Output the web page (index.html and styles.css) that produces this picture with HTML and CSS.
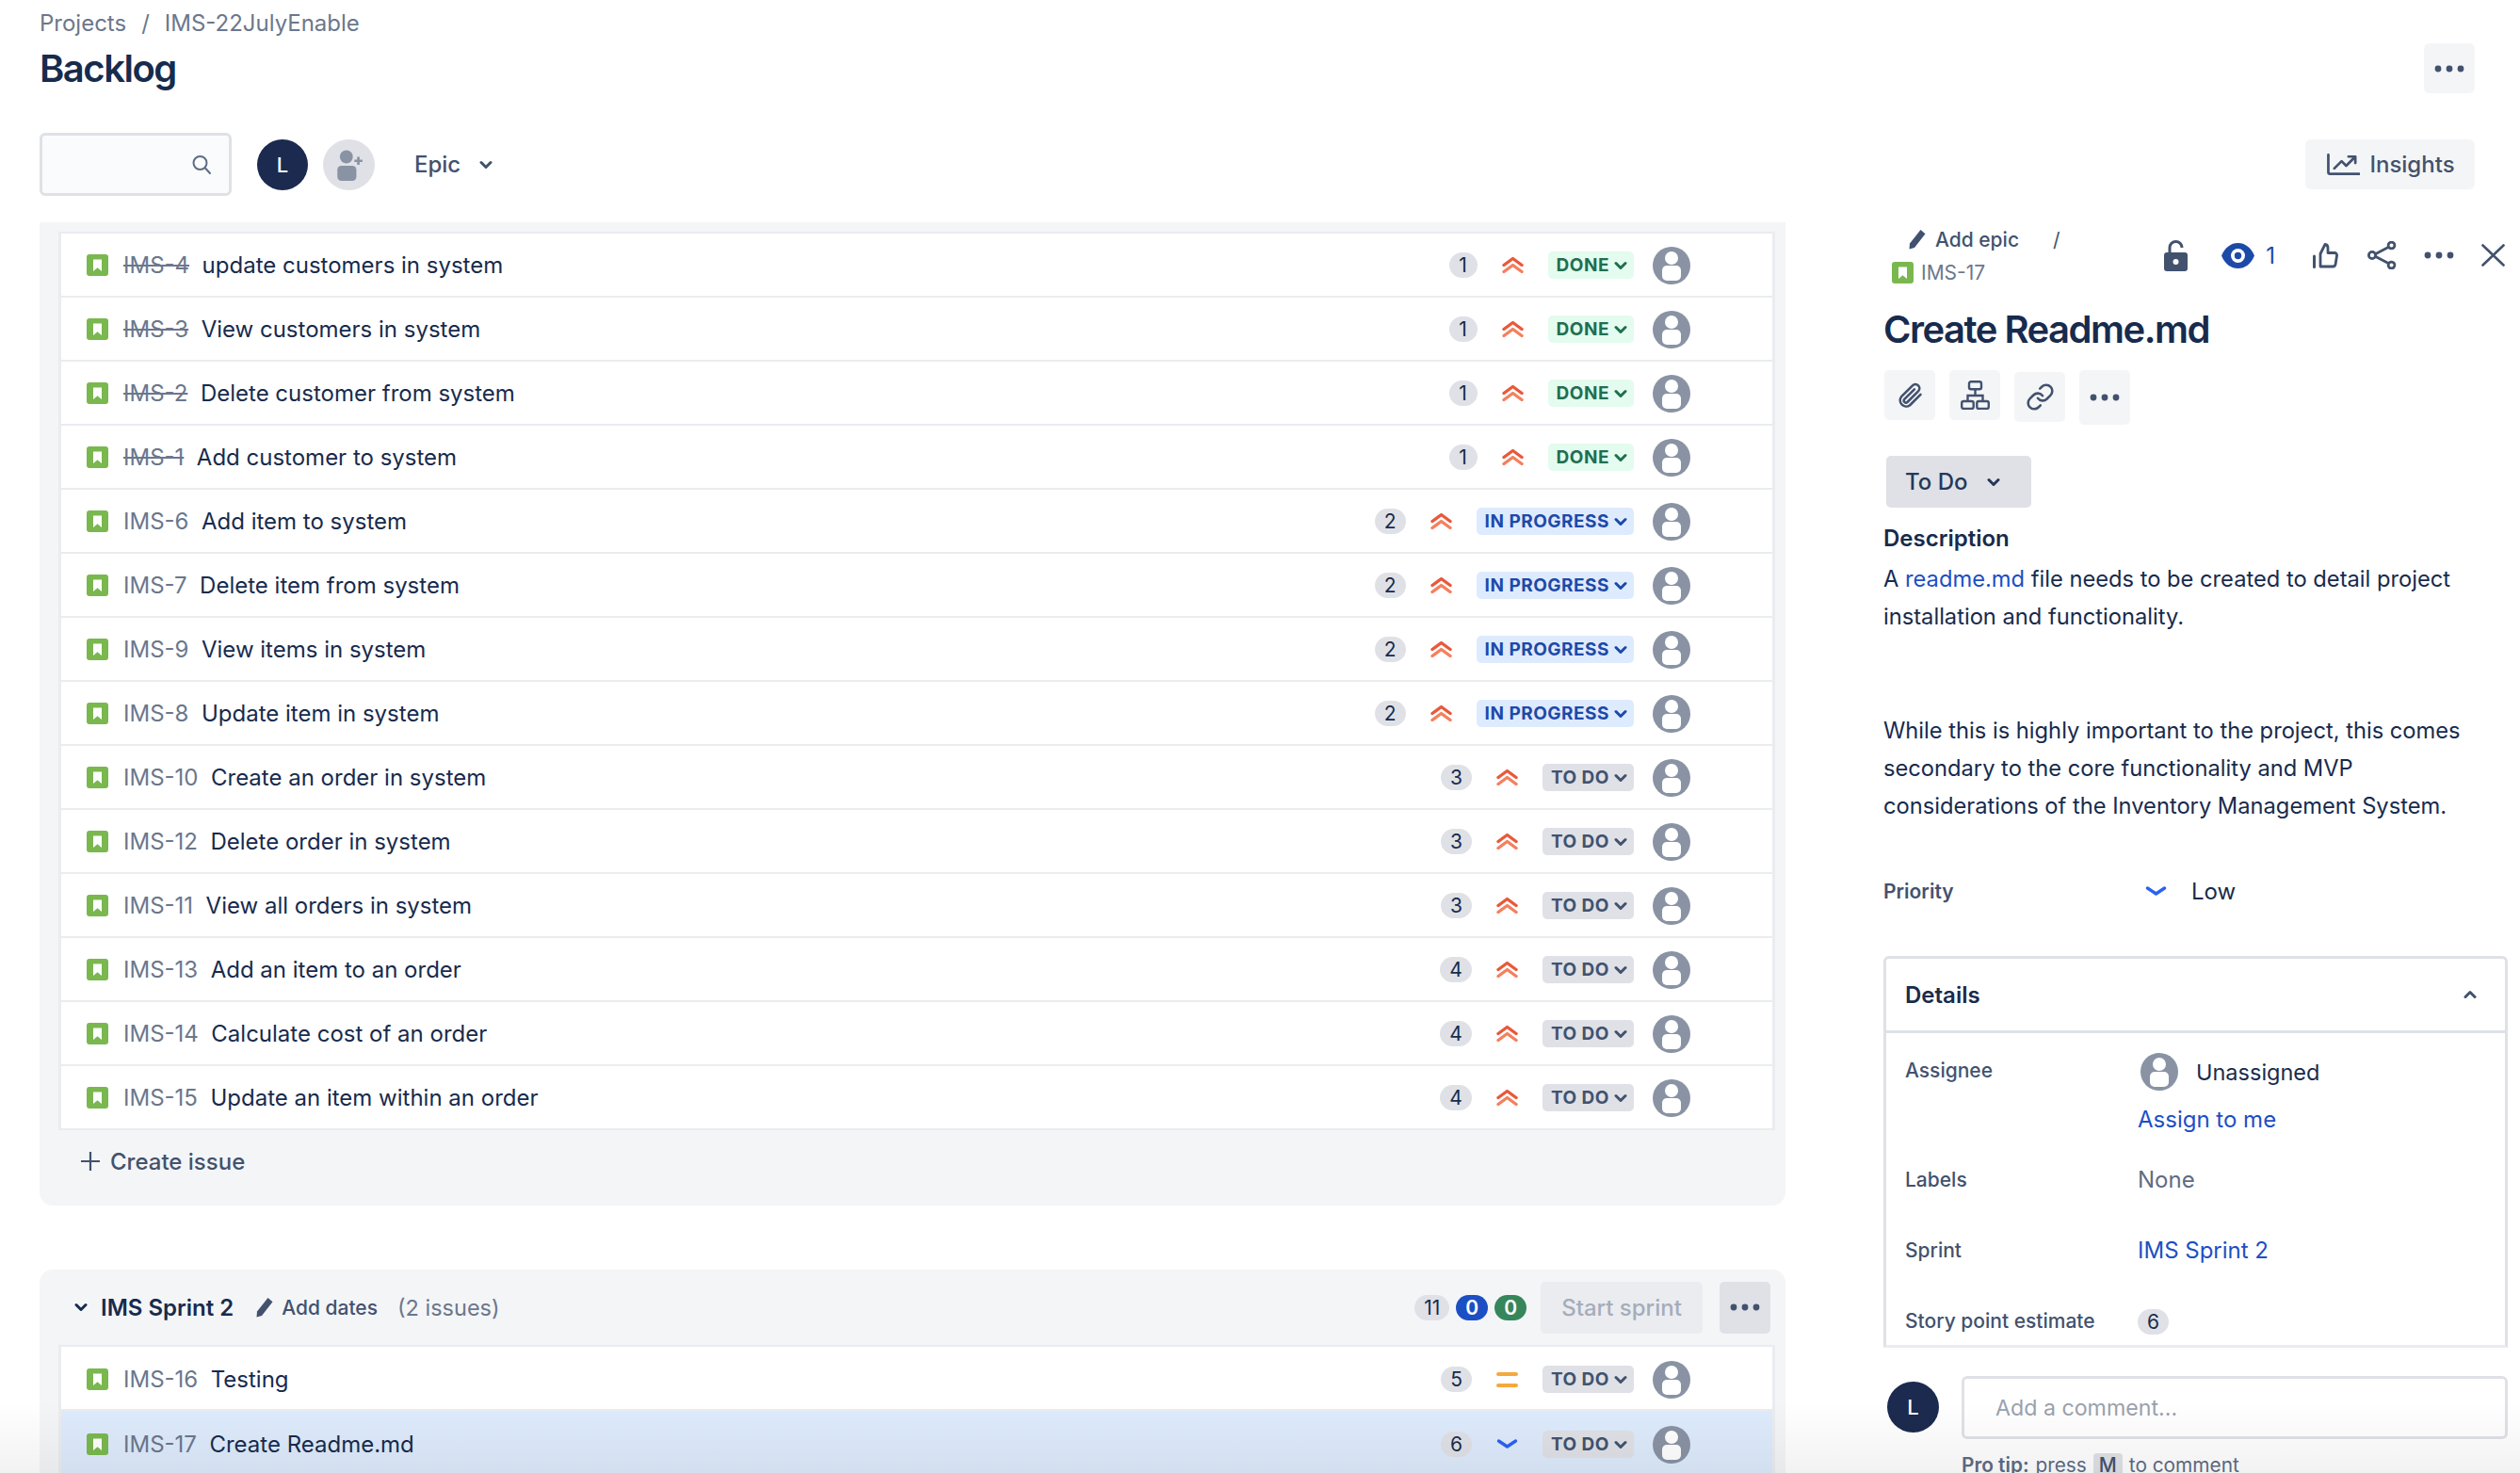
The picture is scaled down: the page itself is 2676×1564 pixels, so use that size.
FILE: index.html
```html
<!DOCTYPE html>
<html lang="en">
<head>
    <meta charset="UTF-8">
    <meta name="viewport" content="width=device-width, initial-scale=1.0">
    <title>Backlog</title>
    <link rel="stylesheet" href="styles.css">
</head>
<body>

<svg class="sprites" width="0" height="0">
    <symbol id="story" viewBox="0 0 23 23">
        <rect width="23" height="23" rx="3" fill="#7ab84f"/>
        <path d="M7 5.500h9v12.500l-4.500-3.800L7 18z" fill="#fff"/>
    </symbol>
    <symbol id="user" viewBox="0 0 40 40">
        <circle cx="20" cy="20" r="20" fill="#8993a4"/>
        <circle cx="20" cy="12" r="7" fill="#fff"/>
        <rect x="10" y="20" width="20" height="16" rx="5" fill="#fff"/>
    </symbol>
    <symbol id="highest" viewBox="0 0 23 19">
        <path d="M2 9.500L11.500 2.500 21 9.500" fill="none" stroke="#e8593b" stroke-width="3.400" stroke-linecap="round" stroke-linejoin="round"/>
        <path d="M2 16.500L11.500 9.500 21 16.500" fill="none" stroke="#f4805f" stroke-width="3.400" stroke-linecap="round" stroke-linejoin="round"/>
    </symbol>
    <symbol id="chev" viewBox="0 0 14 10">
        <path d="M2 2.500L7 7.500 12 2.500" fill="none" stroke="currentColor" stroke-width="3" stroke-linecap="round" stroke-linejoin="round"/>
    </symbol>
    <symbol id="dots" viewBox="0 0 32 8">
        <circle cx="4" cy="4" r="3.400" fill="currentColor"/><circle cx="16" cy="4" r="3.400" fill="currentColor"/><circle cx="28" cy="4" r="3.400" fill="currentColor"/>
    </symbol>
    <symbol id="pencil" viewBox="0 0 20 22">
        <path d="M13.500 1l5 4.200L7 20l-5.500 1.500L2 15.500z" fill="currentColor"/>
    </symbol>
</svg>

<div class="page">

    <div class="crumbs"><span>Projects</span><span class="crumb-sep">/</span><span>IMS-22JulyEnable</span></div>

    <div class="title-row">
        <h1>Backlog</h1>
        <button class="ghost-btn square"><svg class="dots-icon"><use href="#dots"/></svg></button>
    </div>

    <div class="toolbar">
        <div class="toolbar-left">
            <div class="search">
                <svg class="search-icon" viewBox="0 0 22 22"><circle cx="9.500" cy="9" r="7" fill="none" stroke="#5e6c84" stroke-width="2"/><path d="M15 14.500l5 5.500" stroke="#5e6c84" stroke-width="2" stroke-linecap="round"/></svg>
            </div>
            <div class="avatar-me">L</div>
            <div class="avatar-add">
                <svg viewBox="0 0 32 32" width="34" height="34"><circle cx="13" cy="8" r="6.500" fill="#8993a4"/><rect x="4" y="17" width="19" height="15" rx="4" fill="#8993a4"/><path d="M25 8v8M21 12h8" stroke="#8993a4" stroke-width="2.500"/></svg>
            </div>
            <div class="epic">Epic<svg class="chev-icon"><use href="#chev"/></svg></div>
        </div>
        <button class="ghost-btn insights">
            <svg class="trend-icon" viewBox="0 0 36 24"><path d="M1.500 1v19a2 2 0 0 0 2 2h32" fill="none" stroke="currentColor" stroke-width="2.800" stroke-linecap="round"/><path d="M8 16l8-8 5 5 9-9M23.500 3h7.500v7" fill="none" stroke="currentColor" stroke-width="2.800" stroke-linecap="round" stroke-linejoin="round"/></svg>
            Insights
        </button>
    </div>

    <div class="content">

        <div class="backlog">
            <div class="panel panel-first">
                <div class="issue-list">
                    <div class="issue"><svg class="story-icon"><use href="#story"/></svg><span class="key key-done">IMS-4</span><span class="summary">update customers in system</span><span class="points">1</span><svg class="prio"><use href="#highest"/></svg><span class="status status-done">DONE<svg><use href="#chev"/></svg></span><svg class="user-icon"><use href="#user"/></svg></div>
                    <div class="issue"><svg class="story-icon"><use href="#story"/></svg><span class="key key-done">IMS-3</span><span class="summary">View customers in system</span><span class="points">1</span><svg class="prio"><use href="#highest"/></svg><span class="status status-done">DONE<svg><use href="#chev"/></svg></span><svg class="user-icon"><use href="#user"/></svg></div>
                    <div class="issue"><svg class="story-icon"><use href="#story"/></svg><span class="key key-done">IMS-2</span><span class="summary">Delete customer from system</span><span class="points">1</span><svg class="prio"><use href="#highest"/></svg><span class="status status-done">DONE<svg><use href="#chev"/></svg></span><svg class="user-icon"><use href="#user"/></svg></div>
                    <div class="issue"><svg class="story-icon"><use href="#story"/></svg><span class="key key-done">IMS-1</span><span class="summary">Add customer to system</span><span class="points">1</span><svg class="prio"><use href="#highest"/></svg><span class="status status-done">DONE<svg><use href="#chev"/></svg></span><svg class="user-icon"><use href="#user"/></svg></div>
                    <div class="issue"><svg class="story-icon"><use href="#story"/></svg><span class="key">IMS-6</span><span class="summary">Add item to system</span><span class="points">2</span><svg class="prio"><use href="#highest"/></svg><span class="status status-progress">IN PROGRESS<svg><use href="#chev"/></svg></span><svg class="user-icon"><use href="#user"/></svg></div>
                    <div class="issue"><svg class="story-icon"><use href="#story"/></svg><span class="key">IMS-7</span><span class="summary">Delete item from system</span><span class="points">2</span><svg class="prio"><use href="#highest"/></svg><span class="status status-progress">IN PROGRESS<svg><use href="#chev"/></svg></span><svg class="user-icon"><use href="#user"/></svg></div>
                    <div class="issue"><svg class="story-icon"><use href="#story"/></svg><span class="key">IMS-9</span><span class="summary">View items in system</span><span class="points">2</span><svg class="prio"><use href="#highest"/></svg><span class="status status-progress">IN PROGRESS<svg><use href="#chev"/></svg></span><svg class="user-icon"><use href="#user"/></svg></div>
                    <div class="issue"><svg class="story-icon"><use href="#story"/></svg><span class="key">IMS-8</span><span class="summary">Update item in system</span><span class="points">2</span><svg class="prio"><use href="#highest"/></svg><span class="status status-progress">IN PROGRESS<svg><use href="#chev"/></svg></span><svg class="user-icon"><use href="#user"/></svg></div>
                    <div class="issue"><svg class="story-icon"><use href="#story"/></svg><span class="key">IMS-10</span><span class="summary">Create an order in system</span><span class="points">3</span><svg class="prio"><use href="#highest"/></svg><span class="status status-todo">TO DO<svg><use href="#chev"/></svg></span><svg class="user-icon"><use href="#user"/></svg></div>
                    <div class="issue"><svg class="story-icon"><use href="#story"/></svg><span class="key">IMS-12</span><span class="summary">Delete order in system</span><span class="points">3</span><svg class="prio"><use href="#highest"/></svg><span class="status status-todo">TO DO<svg><use href="#chev"/></svg></span><svg class="user-icon"><use href="#user"/></svg></div>
                    <div class="issue"><svg class="story-icon"><use href="#story"/></svg><span class="key">IMS-11</span><span class="summary">View all orders in system</span><span class="points">3</span><svg class="prio"><use href="#highest"/></svg><span class="status status-todo">TO DO<svg><use href="#chev"/></svg></span><svg class="user-icon"><use href="#user"/></svg></div>
                    <div class="issue"><svg class="story-icon"><use href="#story"/></svg><span class="key">IMS-13</span><span class="summary">Add an item to an order</span><span class="points">4</span><svg class="prio"><use href="#highest"/></svg><span class="status status-todo">TO DO<svg><use href="#chev"/></svg></span><svg class="user-icon"><use href="#user"/></svg></div>
                    <div class="issue"><svg class="story-icon"><use href="#story"/></svg><span class="key">IMS-14</span><span class="summary">Calculate cost of an order</span><span class="points">4</span><svg class="prio"><use href="#highest"/></svg><span class="status status-todo">TO DO<svg><use href="#chev"/></svg></span><svg class="user-icon"><use href="#user"/></svg></div>
                    <div class="issue"><svg class="story-icon"><use href="#story"/></svg><span class="key">IMS-15</span><span class="summary">Update an item within an order</span><span class="points">4</span><svg class="prio"><use href="#highest"/></svg><span class="status status-todo">TO DO<svg><use href="#chev"/></svg></span><svg class="user-icon"><use href="#user"/></svg></div>
                </div>
                <div class="create-issue">
                    <svg viewBox="0 0 22 22" width="22" height="22"><path d="M11 1v20M1 11h20" stroke="#42526e" stroke-width="2.200"/></svg>
                    Create issue
                </div>
            </div>

            <div class="panel panel-sprint">
                <div class="sprint-head">
                    <svg class="sprint-chev"><use href="#chev"/></svg>
                    <span class="sprint-name">IMS Sprint 2</span>
                    <svg class="pencil-icon"><use href="#pencil"/></svg>
                    <span class="add-dates">Add dates</span>
                    <span class="issue-count">(2 issues)</span>
                    <span class="totals">
                        <span class="total">11</span>
                        <span class="total total-blue">0</span>
                        <span class="total total-green">0</span>
                    </span>
                    <button class="start-sprint">Start sprint</button>
                    <button class="sprint-more"><svg class="dots-icon"><use href="#dots"/></svg></button>
                </div>
                <div class="issue-list">
                    <div class="issue"><svg class="story-icon"><use href="#story"/></svg><span class="key">IMS-16</span><span class="summary">Testing</span><span class="points">5</span><svg class="prio" viewBox="0 0 22 19"><path d="M1.500 4h19M1.500 16h19" stroke="#f5a93c" stroke-width="4" stroke-linecap="round"/></svg><span class="status status-todo">TO DO<svg><use href="#chev"/></svg></span><svg class="user-icon"><use href="#user"/></svg></div>
                    <div class="issue issue-selected"><svg class="story-icon"><use href="#story"/></svg><span class="key">IMS-17</span><span class="summary">Create Readme.md</span><span class="points">6</span><svg class="prio" viewBox="0 0 22 19"><path d="M2 6l9 6 9-6" fill="none" stroke="#2c62f0" stroke-width="3.400" stroke-linecap="round" stroke-linejoin="round"/></svg><span class="status status-todo">TO DO<svg><use href="#chev"/></svg></span><svg class="user-icon"><use href="#user"/></svg></div>
                </div>
            </div>
        </div>

        <div class="detail">
            <div class="detail-top">
                <div class="detail-path">
                    <div class="path-epic"><svg class="pencil-icon"><use href="#pencil"/></svg><span>Add epic</span><span class="path-sep">/</span></div>
                    <div class="path-key"><svg class="story-icon"><use href="#story"/></svg><span>IMS-17</span></div>
                </div>
                <div class="detail-actions">
                    <svg class="act-lock" viewBox="0 0 25 33"><path d="M6 15V8a6.500 6.500 0 0 1 13 0" fill="none" stroke="#42526e" stroke-width="3"/><rect y="13" width="25" height="20" rx="3" fill="#42526e"/><circle cx="12.500" cy="23" r="3" fill="#fff"/></svg>
                    <svg class="act-eye" viewBox="0 0 35 27"><path d="M0 13.500C4 4.500 10 0 17.500 0S31 4.500 35 13.500C31 22.500 25 27 17.500 27S4 22.500 0 13.500z" fill="#1c4aa8"/><circle cx="17.500" cy="13.500" r="7.500" fill="#fff"/><circle cx="17.500" cy="13.500" r="3.700" fill="#1c4aa8"/></svg>
                    <span class="act-count">1</span>
                    <svg class="act-thumb" viewBox="0 0 27 27"><path d="M8 11.500L13 1.500a3.500 3.500 0 0 1 3 3.500v5.500h7a2.500 2.500 0 0 1 2.500 3l-1.400 9a3 3 0 0 1-3 2.500H8z" fill="none" stroke="#42526e" stroke-width="2.800" stroke-linejoin="round"/><path d="M1.500 14v11.500" stroke="#42526e" stroke-width="3" stroke-linecap="round"/></svg>
                    <svg class="act-share" viewBox="0 0 31 30"><path d="M6 15L25 5M6 15l19 10" stroke="#42526e" stroke-width="2.800"/><circle cx="5" cy="15" r="3.600" fill="#fff" stroke="#42526e" stroke-width="2.800"/><circle cx="25.500" cy="4.500" r="3.400" fill="#fff" stroke="#42526e" stroke-width="2.800"/><circle cx="25.500" cy="25.500" r="3.400" fill="#fff" stroke="#42526e" stroke-width="2.800"/></svg>
                    <svg class="dots-icon act-dots"><use href="#dots"/></svg>
                    <svg class="act-close" viewBox="0 0 25 24"><path d="M1.500 1.500l22 21M23.500 1.500l-22 21" stroke="#42526e" stroke-width="2.600" stroke-linecap="round"/></svg>
                </div>
            </div>

            <h2 class="issue-title">Create Readme.md</h2>

            <div class="tools">
                <button class="tool"><svg viewBox="0 0 24 24" width="31" height="31"><path d="M20.500 11.500l-8.800 8.800a5 5 0 0 1-7-7l9.200-9.200a3.300 3.300 0 0 1 4.700 4.700l-9 9a1.700 1.700 0 0 1-2.400-2.400l8.200-8.200" fill="none" stroke="#42526e" stroke-width="2" stroke-linecap="round" stroke-linejoin="round"/></svg></button>
                <button class="tool"><svg viewBox="0 0 31 31" width="31" height="31"><rect x="9" y="1.200" width="13" height="8" rx="2" fill="none" stroke="#42526e" stroke-width="2.400"/><rect x="1.200" y="22" width="12.500" height="8" rx="2" fill="none" stroke="#42526e" stroke-width="2.400"/><rect x="17.300" y="22" width="12.500" height="8" rx="2" fill="none" stroke="#42526e" stroke-width="2.400"/><path d="M15.500 9v7M7.500 22v-6h16v6" fill="none" stroke="#42526e" stroke-width="2.400"/></svg></button>
                <button class="tool tool-link"><svg viewBox="0 0 24 24" width="31" height="31"><path d="M10 13a5 5 0 0 0 7.540.54l3-3a5 5 0 0 0-7.070-7.070l-1.720 1.710" fill="none" stroke="#42526e" stroke-width="2" stroke-linecap="round"/><path d="M14 11a5 5 0 0 0-7.540-.54l-3 3a5 5 0 0 0 7.070 7.070l1.710-1.710" fill="none" stroke="#42526e" stroke-width="2" stroke-linecap="round"/></svg></button>
                <button class="tool tool-more"><svg class="dots-icon"><use href="#dots"/></svg></button>
            </div>

            <button class="todo-btn">To Do<svg class="chev-icon"><use href="#chev"/></svg></button>

            <h3 class="desc-title">Description</h3>
            <p class="desc desc-first">A <a href="#">readme.md</a> file needs to be created to detail project<br>installation and functionality.</p>
            <p class="desc">While this is highly important to the project, this comes secondary to the core functionality and MVP considerations of the Inventory Management System.</p>

            <div class="priority">
                <span class="field-label">Priority</span>
                <svg class="prio" viewBox="0 0 22 19"><path d="M2 6l9 6 9-6" fill="none" stroke="#2c62f0" stroke-width="3.400" stroke-linecap="round" stroke-linejoin="round"/></svg>
                <span class="priority-val">Low</span>
            </div>

            <div class="details">
                <div class="details-head">
                    <span>Details</span>
                    <svg class="chev-up"><use href="#chev"/></svg>
                </div>
                <div class="field field-assignee">
                    <span class="field-label">Assignee</span>
                    <div>
                        <div class="assignee"><svg class="user-icon"><use href="#user"/></svg>Unassigned</div>
                        <a class="assign-me" href="#">Assign to me</a>
                    </div>
                </div>
                <div class="field field-labels">
                    <span class="field-label">Labels</span>
                    <span class="muted">None</span>
                </div>
                <div class="field">
                    <span class="field-label">Sprint</span>
                    <a href="#">IMS Sprint 2</a>
                </div>
                <div class="field">
                    <span class="field-label">Story point estimate</span>
                    <span><span class="points">6</span></span>
                </div>
            </div>

            <div class="comment">
                <div class="avatar-me comment-avatar">L</div>
                <div class="comment-body">
                    <div class="comment-input">Add a comment...</div>
                    <div class="pro-tip"><b>Pro tip:</b> press <span class="kbd">M</span> to comment</div>
                </div>
            </div>
        </div>

    </div>

    <div class="bottom-fade"></div>
</div>

</body>
</html>
```

FILE: styles.css
```css
* {
    box-sizing: border-box;
}

body {
    margin: 0;
    font-family: Inter, "Liberation Sans", sans-serif;
    font-size: 24px;
    color: #172b4d;
    background-color: #fff;
}

button {
    font-family: inherit;
    border: none;
    padding: 0;
}

a {
    color: #1d4fc4;
    text-decoration: none;
}

.sprites {
    position: absolute;
}

.page {
    position: relative;
    width: 2676px;
    height: 1564px;
    overflow: hidden;
}

.bottom-fade {
    position: absolute;
    left: 0;
    right: 0;
    bottom: 0;
    height: 76px;
    background: linear-gradient(rgba(0,0,0,0), rgba(0,0,0,0.05));
}

/* page header */
.crumbs {
    height: 46px;
    padding: 4px 0 0 42px;
    line-height: 42px;
    color: #6b778c;
}

.crumb-sep {
    margin: 0 16px;
}

.title-row {
    display: flex;
    justify-content: space-between;
    align-items: center;
    height: 53px;
    padding: 0 48px 0 42px;
}

h1 {
    margin: 0;
    font-size: 40px;
    font-weight: 600;
    letter-spacing: -1.500px;
}

.ghost-btn {
    display: flex;
    align-items: center;
    justify-content: center;
    background-color: #f4f5f7;
    border-radius: 6px;
    color: #42526e;
}

.square {
    width: 54px;
    height: 53px;
}

.dots-icon {
    width: 32px;
    height: 8px;
    color: #42526e;
}

.toolbar {
    display: flex;
    justify-content: space-between;
    align-items: center;
    height: 67px;
    margin-top: 42px;
    padding: 0 48px 0 42px;
}

.toolbar-left {
    display: flex;
    align-items: center;
}

.search {
    display: flex;
    align-items: center;
    justify-content: flex-end;
    width: 204px;
    height: 67px;
    padding-right: 18px;
    background-color: #fafbfc;
    border: 3px solid #dfe1e6;
    border-radius: 6px;
}

.search-icon {
    width: 22px;
    height: 22px;
}

.avatar-me {
    display: flex;
    align-items: center;
    justify-content: center;
    width: 54px;
    height: 54px;
    margin-left: 27px;
    border-radius: 50%;
    background-color: #1b2a4e;
    color: #fff;
    font-size: 22px;
    font-weight: 500;
}

.avatar-add {
    display: flex;
    align-items: center;
    justify-content: center;
    width: 55px;
    height: 54px;
    margin-left: 16px;
    border-radius: 50%;
    background-color: #dfe1e6;
}

.epic {
    display: flex;
    align-items: center;
    margin-left: 42px;
    font-weight: 500;
    color: #42526e;
}

.chev-icon {
    width: 14px;
    height: 10px;
    margin-left: 20px;
}

.insights {
    width: 180px;
    height: 53px;
    padding-left: 2px;
    font-size: 24px;
    font-weight: 500;
    gap: 10px;
}

.trend-icon {
    width: 35px;
    height: 24px;
}

.content {
    display: flex;
    align-items: flex-start;
    margin-top: 28px;
    padding-left: 42px;
}

/* backlog panels */
.backlog {
    width: 1854px;
    flex-shrink: 0;
}

.panel {
    padding: 0 11px 0 20px;
    background-color: #f4f5f7;
}

.panel-first {
    padding-top: 10px;
    padding-bottom: 14px;
    border-radius: 0 0 14px 14px;
}

.panel-sprint {
    margin-top: 68px;
    border-radius: 14px 14px 0 0;
}

.issue-list {
    border: 3px solid #ebecf0;
    border-bottom-width: 0;
    border-top-width: 2px;
    background-color: #fff;
}

.issue {
    display: flex;
    align-items: center;
    height: 68px;
    padding: 1px 87px 0 27px;
    border-bottom: 2px solid #ebecf0;
}

.panel-sprint .issue {
    padding-top: 3px;
}

.issue-selected {
    background-color: #deebfc;
    border-bottom: none;
}

.story-icon {
    width: 23px;
    height: 23px;
    flex-shrink: 0;
}

.key {
    margin-left: 16px;
    color: #6b778c;
}

.key-done {
    text-decoration: line-through;
}

.summary {
    flex: 1;
    margin-left: 13.500px;
}

.points {
    display: inline-flex;
    align-items: center;
    justify-content: center;
    min-width: 30px;
    height: 27px;
    padding: 0 10px;
    border-radius: 14px;
    background-color: #dfe1e6;
    font-size: 21px;
}

.prio {
    width: 23px;
    height: 19px;
    margin: 0 26px;
    flex-shrink: 0;
}

.status {
    display: flex;
    align-items: center;
    height: 29px;
    padding: 0 7px 0 9px;
    border-radius: 5px;
    font-size: 19px;
    font-weight: 700;
    letter-spacing: 0.5px;
}

.status svg {
    width: 14px;
    height: 10px;
    margin-left: 5px;
}

.status-done {
    background-color: #e3fcef;
    color: #216e4e;
}

.status-progress {
    background-color: #deebff;
    color: #1c4aa8;
}

.status-todo {
    background-color: #dfe1e6;
    color: #42526e;
}

.user-icon {
    width: 40px;
    height: 40px;
    margin-left: 20px;
    flex-shrink: 0;
}

.create-issue {
    display: flex;
    align-items: center;
    gap: 10px;
    height: 66px;
    padding-left: 23px;
    font-weight: 500;
    color: #42526e;
}

.sprint-head {
    display: flex;
    align-items: center;
    height: 80px;
    padding: 0 5px 0 17px;
}

.sprint-chev {
    width: 14px;
    height: 10px;
}

.sprint-name {
    margin-left: 14px;
    font-weight: 600;
}

.pencil-icon {
    width: 20px;
    height: 22px;
    color: #42526e;
}

.sprint-head .pencil-icon {
    margin-left: 23px;
}

.add-dates {
    margin-left: 8px;
    font-size: 21px;
    font-weight: 500;
    color: #42526e;
}

.issue-count {
    flex: 1;
    margin-left: 21px;
    font-size: 23.500px;
    color: #6b778c;
}

.totals {
    display: flex;
    gap: 7px;
    margin-right: 15px;
}

.total {
    display: flex;
    align-items: center;
    justify-content: center;
    height: 27px;
    min-width: 33px;
    padding: 0 10px;
    border-radius: 14px;
    background-color: #dfe1e6;
    font-size: 21px;
}

.total-blue {
    background-color: #1d4fc4;
    color: #fff;
    font-weight: 600;
}

.total-green {
    background-color: #36865c;
    color: #fff;
    font-weight: 600;
}

.start-sprint {
    width: 172px;
    height: 55px;
    border-radius: 5px;
    background-color: #ebecf0;
    color: #a5adba;
    font-size: 24px;
    font-weight: 500;
}

.sprint-more {
    display: flex;
    align-items: center;
    justify-content: center;
    width: 54px;
    height: 55px;
    margin-left: 18px;
    border-radius: 5px;
    background-color: #dfe1e6;
}

/* issue detail */
.detail {
    width: 663px;
    margin-left: 104px;
    flex-shrink: 0;
}

.detail-top {
    display: flex;
    justify-content: space-between;
    align-items: center;
    height: 70px;
    padding-right: 3px;
}

.path-epic {
    display: flex;
    align-items: center;
    height: 36px;
    padding-left: 26px;
    font-size: 21px;
    font-weight: 500;
    color: #42526e;
}

.path-epic .pencil-icon {
    margin-right: 9px;
}

.path-sep {
    margin-left: 36px;
    font-weight: 400;
}

.path-key {
    display: flex;
    align-items: center;
    height: 34px;
    padding-left: 9px;
    font-size: 21px;
    color: #6b778c;
}

.path-key span {
    margin-left: 8px;
}

.detail-actions {
    display: flex;
    align-items: center;
}

.act-lock {
    width: 25px;
    height: 33px;
}

.act-eye {
    width: 35px;
    height: 27px;
    margin-left: 36px;
}

.act-count {
    margin-left: 12px;
    color: #1c4aa8;
    font-size: 24px;
}

.act-thumb {
    width: 27px;
    height: 27px;
    margin-left: 40px;
}

.act-share {
    width: 31px;
    height: 30px;
    margin-left: 31px;
}

.act-dots {
    margin-left: 29px;
}

.act-close {
    width: 25px;
    height: 24px;
    margin-left: 29px;
}

.issue-title {
    margin: 20px 0 0;
    font-size: 40px;
    line-height: 48px;
    font-weight: 600;
    letter-spacing: -1.500px;
}

.tools {
    display: flex;
    align-items: flex-start;
    gap: 15px;
    height: 58px;
    margin-top: 19px;
    padding-left: 1px;
}

.tool {
    display: flex;
    align-items: center;
    justify-content: center;
    width: 54px;
    height: 53px;
    border-radius: 5px;
    background-color: #f4f5f7;
}

.tool-link {
    margin-top: 2px;
}

.tool-more {
    height: 58px;
}

.todo-btn {
    display: flex;
    align-items: center;
    width: 154px;
    height: 55px;
    margin: 33px 0 0 3px;
    padding-left: 20px;
    border-radius: 5px;
    background-color: #dfe1e6;
    color: #253858;
    font-size: 24px;
    font-weight: 500;
}

.todo-btn .chev-icon {
    margin-left: 20px;
}

.desc-title {
    margin: 15px 0 0;
    font-size: 24px;
    line-height: 36px;
    font-weight: 600;
}

.desc {
    margin: 0;
    font-size: 23.700px;
    line-height: 40px;
}

.desc-first {
    margin-top: 5px;
    margin-bottom: 81px;
}

.priority {
    display: flex;
    align-items: center;
    height: 40px;
    margin-top: 50px;
}

.field-label {
    font-size: 21px;
    font-weight: 500;
    color: #42526e;
}

.priority .field-label {
    width: 278px;
    font-weight: 600;
}

.priority .prio {
    margin: 0 26px 0 0;
}

.details {
    height: 416px;
    margin-top: 49px;
    overflow: hidden;
    border: 3px solid #dfe1e6;
    border-bottom-color: #ebecf0;
    border-radius: 6px 6px 0 0;
}

.details-head {
    display: flex;
    justify-content: space-between;
    align-items: center;
    height: 79px;
    padding: 0 30px 0 20px;
    border-bottom: 3px solid #dfe1e6;
    font-weight: 600;
}

.chev-up {
    width: 14px;
    height: 10px;
    color: #42526e;
    transform: rotate(180deg);
}

.field {
    display: grid;
    grid-template-columns: 247px 1fr;
    align-items: center;
    min-height: 40px;
    margin-top: 35px;
    padding-left: 20px;
}

.field-assignee {
    align-items: start;
    margin-top: 21px;
}

.field-assignee .field-label {
    line-height: 38px;
}

.field-labels {
    margin-top: 23px;
}

.assignee {
    display: flex;
    align-items: center;
    gap: 19px;
    height: 40px;
    font-size: 23.500px;
}

.assignee .user-icon {
    margin-left: 3px;
}

.assign-me {
    display: block;
    margin-top: 11px;
    line-height: 40px;
}

.muted {
    color: #5e6c84;
}

.comment {
    display: flex;
    margin-top: 30px;
}

.comment-avatar {
    flex-shrink: 0;
    width: 55px;
    margin: 6px 24px 0 4px;
}

.comment-body {
    flex: 1;
}

.comment-input {
    display: flex;
    align-items: center;
    height: 67px;
    padding-left: 33px;
    border: 3px solid #dfe1e6;
    border-radius: 6px;
    color: #9aa1ad;
    font-size: 23.200px;
}

.pro-tip {
    display: flex;
    align-items: center;
    gap: 7px;
    height: 30px;
    margin-top: 12px;
    font-size: 20.800px;
    color: #5e6c84;
}

.pro-tip b {
    font-weight: 600;
}

.kbd {
    padding: 0 6px;
    border-radius: 4px;
    background-color: #dfe1e6;
    font-weight: 500;
    color: #42526e;
}
```
